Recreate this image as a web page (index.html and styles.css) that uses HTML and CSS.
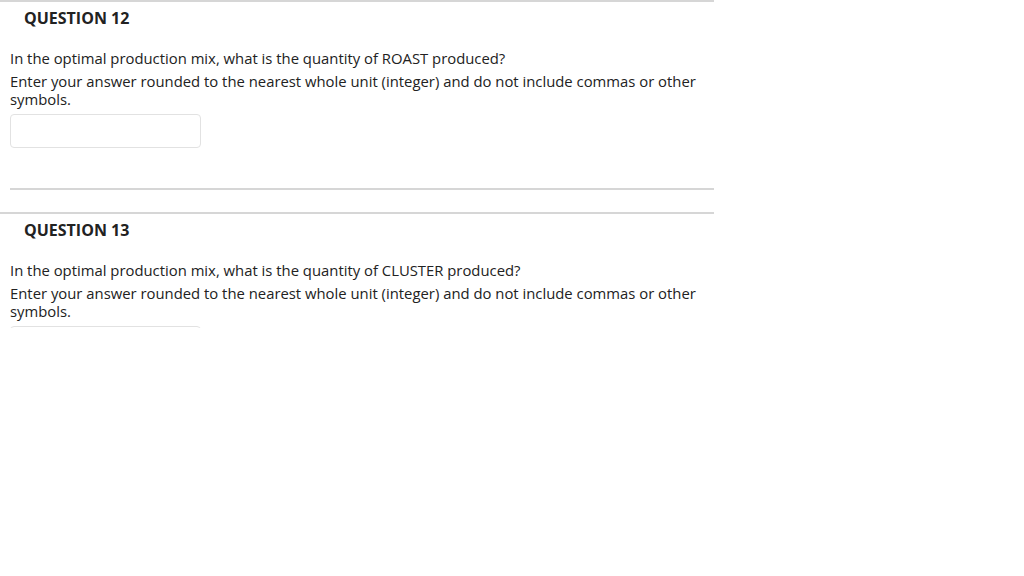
FILE: index.html
```html
<!DOCTYPE html>
<html>
<head>
<meta charset="utf-8">
<link rel="stylesheet" href="styles.css">
</head>
<body>
<div class="page">
  <section class="question">
    <h3 class="q-head">QUESTION 12</h3>
    <div class="q-body">
      <p class="q-text">In the optimal production mix, what is the quantity of ROAST produced?</p>
      <p class="q-text">Enter your answer rounded to the nearest whole unit (integer) and do not include commas or other symbols.</p>
      <input class="answer" type="text">
      <hr class="divider">
    </div>
  </section>
  <section class="question">
    <h3 class="q-head">QUESTION 13</h3>
    <div class="q-body">
      <p class="q-text">In the optimal production mix, what is the quantity of CLUSTER produced?</p>
      <p class="q-text">Enter your answer rounded to the nearest whole unit (integer) and do not include commas or other symbols.</p>
      <input class="answer" type="text">
      <hr class="divider">
    </div>
  </section>
</div>
</body>
</html>
```
FILE: styles.css
```css
html, body {
  margin: 0;
  padding: 0;
  background: #fff;
}
body {
  font-family: "Open Sans", "Liberation Sans", sans-serif;
  color: #222;
}
.page {
  width: 714px;
  height: 328px;
  overflow: hidden;
}
.question {
  border-top: 2px solid #d6d6d6;
}
.q-head {
  margin: 0;
  padding: 5px 0 0 24px;
  font-size: 16px;
  line-height: 22px;
  font-weight: 700;
  color: #222;
}
.q-body {
  padding: 20px 0 0 10px;
}
.q-text {
  margin: 0 0 5px;
  font-size: 14.85px;
  line-height: 18px;
  color: #222;
  padding-right: 8px;
}
.answer {
  display: block;
  box-sizing: border-box;
  width: 191px;
  height: 34px;
  margin: 6px 0 0;
  padding: 4px 8px;
  border: 1px solid #e2e2e2;
  border-radius: 4px;
  background: #fff;
  outline: none;
}
.divider {
  margin: 40px 0 0;
  border: 0;
  border-top: 2px solid #d6d6d6;
  height: 0;
}
.question + .question {
  margin-top: 22px;
}
```
